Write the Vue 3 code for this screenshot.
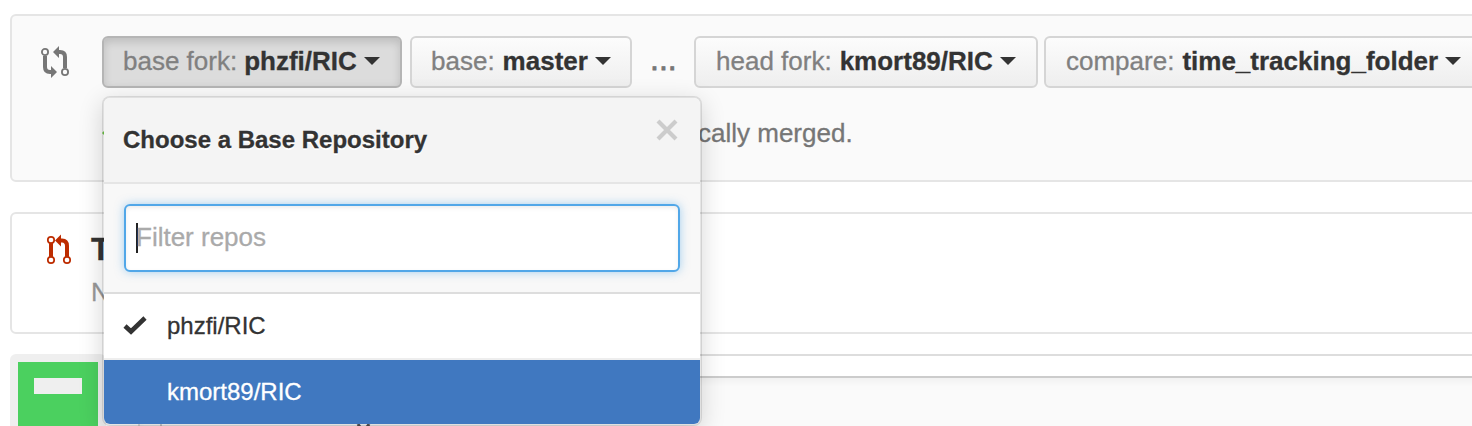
<script setup>
import { ref } from 'vue'
const query = ref('')
const ranges = [
  { id: 'bf', label: 'base fork:', value: 'phzfi/RIC', active: true },
  { id: 'b', label: 'base:', value: 'master' },
  { id: 'hf', label: 'head fork:', value: 'kmort89/RIC' },
  { id: 'c', label: 'compare:', value: 'time_tracking_folder' }
]
const repos = [
  { name: 'phzfi/RIC', selected: true },
  { name: 'kmort89/RIC', hover: true }
]
</script>

<template>
  <main class="page">
    <section class="range">
      <svg class="compare-icon" viewBox="0 0 28 32" width="28" height="32">
        <g fill="none" stroke="#767676">
          <circle cx="4" cy="5" r="3.1" stroke-width="1.8" />
          <circle cx="24" cy="25" r="3.1" stroke-width="1.8" />
          <path d="M4 9V20Q4 25 9 25H11M24 21V10Q24 5 19 5H17" stroke-width="4" />
        </g>
        <path d="M10 19L16 25L10 31ZM18 -1L12 5L18 11Z" fill="#767676" />
      </svg>
      <div class="controls">
        <template v-for="r in ranges" :key="r.id">
          <span v-if="r.id === 'hf'" class="dots">...</span>
          <button class="btn" :class="[r.id, { active: r.active }]">
            <span class="label">{{ r.label }}</span>
            <b>{{ r.value }}</b>
            <i class="caret"></i>
          </button>
        </template>
      </div>
      <div class="status">
        <svg class="tick" width="10" height="10" viewBox="0 0 10 10"><path d="M0 5L4 1V9Z" fill="#6cc644" /></svg>
        <span>cally merged.</span>
      </div>
    </section>

    <section class="discussion">
      <svg class="pr-icon" viewBox="0 0 26 32" width="26" height="32">
        <path d="M5 9V24M21 24V12Q21 6.5 16 6.5H13" fill="none" stroke="#bd2c00" stroke-width="4" />
        <path d="M15 0.5L9 6.5L15 12.5Z" fill="#bd2c00" />
        <g fill="#fff" stroke="#bd2c00" stroke-width="1.7">
          <circle cx="5" cy="6" r="3.2" />
          <circle cx="5" cy="26" r="3.2" />
          <circle cx="21" cy="26" r="3.2" />
        </g>
      </svg>
      <div class="summary">
        <b>T</b>
        <span>N</span>
      </div>
    </section>

    <section class="compose">
      <div class="avatar"><span></span></div>
      <div class="editor">
        <div class="head"></div>
        <div class="body">
          <span class="field"></span>
          <svg class="hint" width="15" height="16" viewBox="0 0 15 16"><path d="M2 0L12 16M13 0L3 16" stroke="#555" stroke-width="3" /></svg>
        </div>
      </div>
    </section>

    <aside class="menu">
      <header>
        <h2>Choose a Base Repository</h2>
        <svg width="22" height="22" viewBox="0 0 22 22"><path d="M2 2L20 20M20 2L2 20" stroke="#ccc" stroke-width="4.2" /></svg>
      </header>
      <div class="filter">
        <div class="box">
          <i class="cursor"></i>
          <input v-model="query" placeholder="Filter repos" />
        </div>
      </div>
      <div v-for="r in repos" :key="r.name" class="item" :class="{ hover: r.hover }">
        <span class="check">
          <svg v-if="r.selected" width="24" height="20" viewBox="0 0 24 20"><path d="M2 10L8 15.5L22 2" fill="none" stroke="#333" stroke-width="4.6" /></svg>
        </span>
        <span class="name">{{ r.name }}</span>
      </div>
    </aside>
  </main>
</template>

<style>
body { margin: 0; background: #fff; }
</style>

<style scoped>
* { box-sizing: border-box; }
.page {
  position: relative;
  width: 1472px;
  height: 426px;
  padding: 14px 0 0 10px;
  overflow: hidden;
  font-family: "Liberation Sans", Arial, sans-serif;
  font-size: 26px;
  color: #333;
  -webkit-text-stroke: .3px;
}
.range {
  display: grid;
  grid-template-columns: 61px 1fr;
  grid-template-rows: 52px 52px;
  row-gap: 28px;
  width: 1500px;
  height: 168px;
  padding: 20px 0 0 29px;
  border: 2px solid #e5e5e5;
  border-radius: 6px;
  background: #fafafa;
}
.compare-icon { margin-top: 11px; overflow: visible; }
.controls { display: flex; }
.btn {
  display: flex;
  align-items: center;
  flex: none;
  height: 52px;
  margin: 0 8px 0 0;
  padding: 0 0 2px 19px;
  border: 2px solid #d5d5d5;
  border-radius: 6px;
  background: linear-gradient(#fcfcfc, #eee);
  font: inherit;
  color: #333;
  white-space: nowrap;
}
.btn.active {
  border-color: #b5b5b5;
  background: #dcdcdc;
  box-shadow: inset 0 4px 8px rgba(0, 0, 0, .14);
}
.btn.bf { width: 300px; }
.btn.b { width: 222px; margin-right: 0; }
.btn.hf { width: 344px; margin-right: 6px; padding-left: 20px; }
.btn.c { width: 450px; padding-left: 20px; }
.label { margin-right: 8px; color: #808080; }
.bf .label { margin-right: 7px; }
.caret {
  margin-left: 7px;
  border: 8px solid transparent;
  border-top-color: #333;
  border-bottom: 0;
}
.dots { flex: none; width: 62px; padding-left: 18px; font-size: 32px; line-height: 46px; color: #767676; -webkit-text-stroke: .8px; }
.status { display: flex; align-items: center; grid-column: 2; height: 34px; color: #767676; }
.status span { margin-left: 586px; }
.tick { flex: none; }
.discussion {
  display: flex;
  width: 1500px;
  height: 122px;
  margin-top: 30px;
  padding: 18px 0 0 34px;
  border: 2px solid #e5e5e5;
  border-radius: 6px;
}
.pr-icon { margin-top: 2px; overflow: visible; }
.summary { display: flex; flex-direction: column; margin-left: 19px; }
.summary b { font-size: 32px; line-height: 34px; }
.summary span { margin-top: 10px; line-height: 32px; color: #999; }
.compose { display: flex; margin-top: 20px; }
.avatar {
  flex: none;
  width: 96px;
  height: 96px;
  padding: 8px;
  border-radius: 6px;
  background: linear-gradient(#4bd05f, #4bd05f) 8px 8px / 80px 80px no-repeat #efefef;
}
.avatar span { display: block; width: 48px; height: 16px; margin: 16px; background: #efefef; }
.editor { flex: none; width: 1400px; margin-left: 32px; border: 2px solid #ddd; border-radius: 6px; }
.head { height: 20px; }
.body { display: flex; border-top: 2px solid #ccc; background: #fafafa; box-shadow: inset 0 4px 6px rgba(0, 0, 0, .04); height: 80px; }
.field { width: 22px; border-right: 2px solid #ccc; }
.hint { margin: 46px 0 0 194px; }
.menu {
  position: absolute;
  top: 96px;
  left: 102px;
  width: 600px;
  height: 330px;
  border: 2px solid rgba(0, 0, 0, .1);
  border-radius: 8px;
  overflow: hidden;
  background: #fff;
  background-clip: padding-box;
  box-shadow: 0 6px 24px rgba(0, 0, 0, .16);
  font-size: 24px;
}
header {
  display: flex;
  justify-content: space-between;
  height: 86px;
  padding: 21px 22px 0 19px;
  border-bottom: 2px solid #e5e5e5;
  background: #f4f4f4;
}
h2 { margin: 0; font-size: 24px; line-height: 42px; text-shadow: 0 2px 0 #fff; }
.filter { height: 110px; padding: 20px; border-bottom: 2px solid #ddd; background: #f8f8f8; }
.box {
  display: flex;
  align-items: center;
  height: 68px;
  padding-left: 10px;
  border: 2px solid #51a7e8;
  border-radius: 6px;
  background: #fff;
  box-shadow: inset 0 2px 4px rgba(0, 0, 0, .075), 0 0 10px rgba(81, 167, 232, .5);
}
.cursor { width: 2px; height: 30px; background: #222; }
input { width: 500px; margin: 0 0 2px -2px; padding: 0; border: 0; outline: 0; background: transparent; font: 26px "Liberation Sans", Arial, sans-serif; }
input::placeholder { color: #aaa; opacity: 1; }
.item { display: flex; align-items: center; height: 66px; padding-left: 19px; border-bottom: 2px solid #eee; }
.item.hover { height: 64px; border: 0; background: #4078c0; color: #fff; }
.check { display: flex; width: 44px; height: 20px; }
</style>
